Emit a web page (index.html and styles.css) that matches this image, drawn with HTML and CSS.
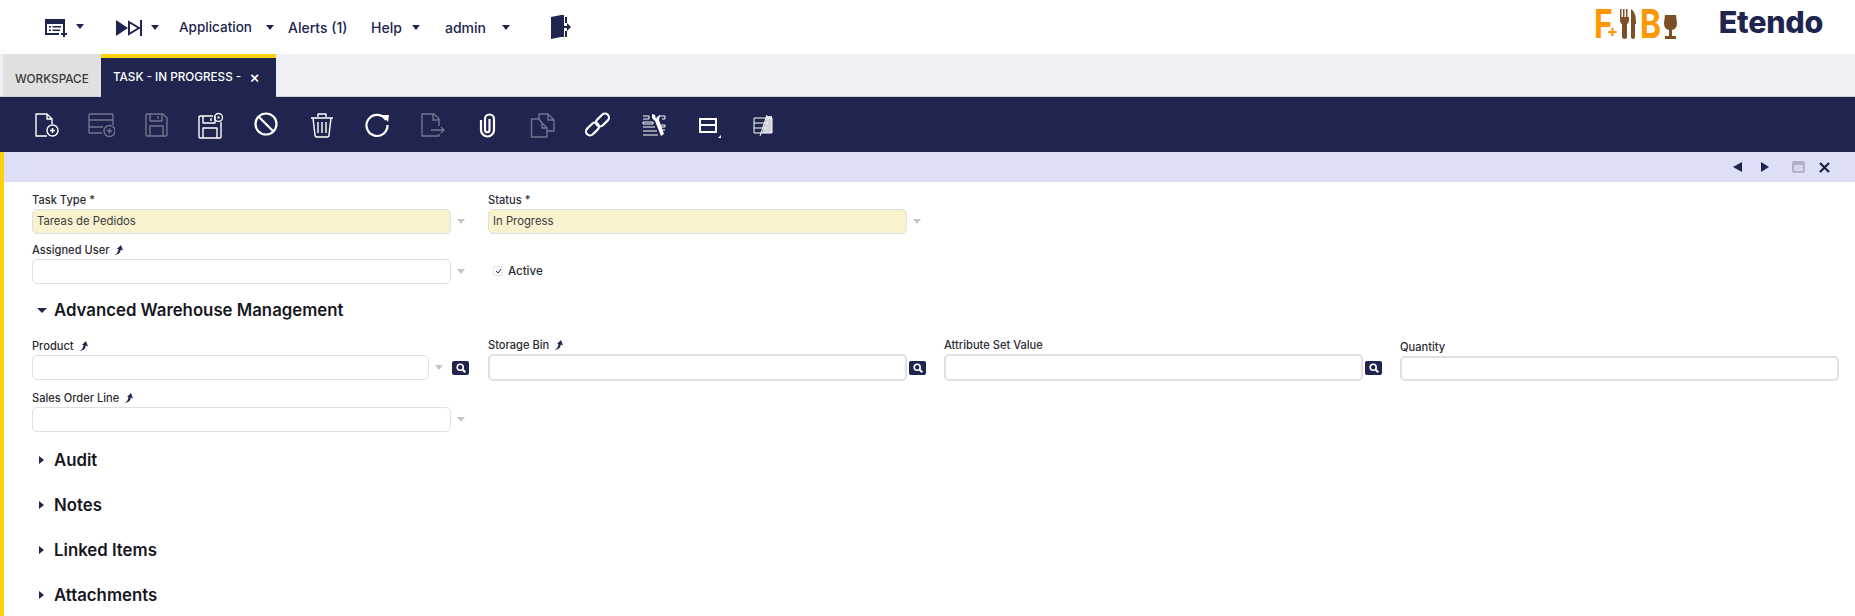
FILE: index.html
```html
<!DOCTYPE html>
<html lang="en">
<head>
<meta charset="utf-8">
<title>Task - In Progress</title>
<link rel="stylesheet" href="styles.css">
</head>
<body>
<header class="topbar">
  <svg class="ic-menu" width="22" height="18" viewBox="0 0 22 18"><path class="navy" fill-rule="evenodd" d="M0 0h20v12h-2V5H2v9h12v2H0zM4 7h2v1.500H4zM7.500 7H16v1.500H7.500zM4 10.500h2V12H4zM7.500 10.500H15V12H7.500z"/><path class="navy" d="M16 14h2v-2h2v2h2v2h-2v2h-2v-2h-2z"/></svg>
  <span class="caret caret-menu"></span>
  <svg class="ic-skip" width="26" height="16" viewBox="0 0 26 16"><path class="navy" d="M0 0l12 8-12 8z"/><path d="M13 2l10 6-10 6z" fill="none" stroke="#20254f" stroke-width="2"/><path class="navy" d="M24 0h2v16h-2z"/></svg>
  <span class="caret caret-skip"></span>
  <span class="nav nav-app">Application</span><span class="caret caret-app"></span>
  <span class="nav nav-alerts">Alerts (1)</span>
  <span class="nav nav-help">Help</span><span class="caret caret-help"></span>
  <span class="nav nav-admin">admin</span><span class="caret caret-admin"></span>
  <svg class="ic-exit" width="20" height="24" viewBox="0 0 20 24"><path class="navy" d="M0 2l10-2h3v11h-1v2h1v9h-3L0 24z"/><path class="navy" d="M14 2h2v6h-2zM14 16h2v6h-2zM11 11h5V8l4 4-4 4v-3h-5z"/></svg>
  <div class="logos">
    <div class="fnb">
      <span class="fnb-f">F</span><span class="fnb-plus">+</span>
      <svg class="fnb-cut" width="16" height="30" viewBox="0 0 16 30"><path class="brown" d="M0 0h1.500v8H3V0h1.500v8H6V0h1.500v8H9V11q0 3-2 4v13q0 2-2.500 2T2 28V15q-2-1-2-4zM11 0q5 3 5 13v2h-1v13q0 2-2 2t-2-2z"/></svg>
      <span class="fnb-b">B</span>
      <svg class="fnb-glass" width="13" height="24" viewBox="0 0 13 24"><path class="brown" d="M1 0h11l1 8q0 6-5 7v6h4v3H1v-3h4v-6Q0 14 0 8z"/></svg>
    </div>
    <span class="etendo">Etendo</span>
  </div>
</header>

<nav class="tabbar">
  <div class="tab tab-work">WORKSPACE</div>
  <div class="tab tab-active">TASK - IN PROGRESS -<span class="tab-x">×</span></div>
</nav>

<div class="toolbar">
  <span class="tool"><svg viewBox="0 0 28 28"><g class="st"><path d="M15 25H4V3h11l5 5v5M15 3v5h5"/><circle cx="20.500" cy="19.500" r="5.500"/><path d="M18 19.500h5M20.500 17v5" stroke-width="1.500"/></g></svg></span>
  <span class="tool off"><svg viewBox="0 0 28 28"><g class="st"><path d="M15 22H3a1 1 0 0 1-1-1V4a1 1 0 0 1 1-1h22a1 1 0 0 1 1 1v10M2 9h24M2 16h14"/><circle cx="22.500" cy="20" r="5.500"/><path d="M20 20h5M22.500 17.500v5" stroke-width="1.500"/></g></svg></span>
  <span class="tool off"><svg viewBox="0 0 28 28"><g class="st"><path d="M5 3h16l4 4v17a1 1 0 0 1-1 1H5a1 1 0 0 1-1-1V4a1 1 0 0 1 1-1zM8 3v7h12V3M8 25V15h13v10M16 5v3"/></g></svg></span>
  <span class="tool"><svg viewBox="0 0 28 28"><g class="st"><path d="M16 5H3a1 1 0 0 0-1 1v20a1 1 0 0 0 1 1h20a1 1 0 0 0 1-1V11M6 5v7h12V5M6 27V17h14v10M14 7v3"/><circle cx="21.500" cy="6.500" r="4"/><path d="M20.500 6.500h2" stroke-width="2"/></g></svg></span>
  <span class="tool"><svg viewBox="0 0 28 28"><g class="st thick"><circle cx="14" cy="13" r="10.500"/><path d="M7 6l14 14"/></g></svg></span>
  <span class="tool"><svg viewBox="0 0 28 28"><g class="st"><path d="M3 7h22M10 6V3h8v3M5 7l2 17q0 2 2 2h10q2 0 2-2l2-17M10 11v11M14 11v11M18 11v11"/></g></svg></span>
  <span class="tool"><svg viewBox="0 0 28 28"><g class="st thick"><path d="M23 9a10.500 10.500 0 1 0 1.500 5"/></g><path class="wh" d="M19 4l7 0-1 7z"/></svg></span>
  <span class="tool off"><svg viewBox="0 0 28 28"><g class="st"><path d="M21 15V8l-5-5H4v22h17v-2M15 3v6h6M13 19h13M23 16l3 3-3 3"/></g></svg></span>
  <span class="tool"><svg viewBox="0 0 28 28"><g class="st thick"><path d="M8 9v10a6.500 6.500 0 0 0 13 0V8a4.500 4.500 0 0 0-9 0v11a2 2 0 0 0 4.500 0V8"/></g></svg></span>
  <span class="tool off"><svg viewBox="0 0 28 28"><g class="st"><path d="M11 8H3.500v18H19v-9l-5-5v5h5M14 12l-3-4M11 8V3h9l6 6v11h-7M20 3v6h6"/></g></svg></span>
  <span class="tool"><svg viewBox="0 0 28 28"><g class="st thick"><rect x="12" y="5" width="15" height="8" rx="4" transform="rotate(-45 19.500 9)"/><rect x="2" y="14" width="15" height="8" rx="4" transform="rotate(-45 9.500 18)"/></g></svg></span>
  <span class="tool"><svg viewBox="0 0 28 28"><g class="st thin"><path d="M4 5h6v3H4M13 5h2M20 5h6v3h-3M4 11h10v2H4zM4 16h12M4 20h14M4 24h15M22 14h4v2h-4M22 19h4"/></g><path class="wh" d="M13 3l3 1 1 4 1-2 3-2-1 5 5 14-3 2-6-15-3-3z"/></svg></span>
  <span class="tool"><svg viewBox="0 0 28 28"><path class="wh" fill-rule="evenodd" d="M5 7h18v15H5zM7 9v4h14V9zM7 15v5h14v-5z"/><path class="wh" d="M27 24v3h-3z"/></svg></span>
  <span class="tool"><svg viewBox="0 0 28 28"><g class="st thin"><path d="M5 7h18v15H5zM5 12h14M5 17h12"/></g><path class="wh grad" d="M18 5l5 0v17H13z"/><path d="M18 4L11 25" stroke="#fff" stroke-width="1"/></svg></span>
</div>

<main class="view">
  <div class="band">
    <span class="tri-l"></span><span class="tri-r"></span>
    <span class="maxi"></span>
    <span class="close">
      <svg width="11" height="11" viewBox="0 0 11 11"><path d="M1 1l9 9M10 1l-9 9" stroke="#20254f" stroke-width="2.400" fill="none"/></svg>
    </span>
  </div>

  <form class="form">
    <div class="grid g1">
      <div class="field">
        <label>Task Type *</label>
        <div class="ctl"><div class="input req">Tareas de Pedidos</div><span class="drop"></span></div>
      </div>
      <div class="field">
        <label>Status *</label>
        <div class="ctl"><div class="input req">In Progress</div><span class="drop"></span></div>
      </div>
    </div>
    <div class="grid g2">
      <div class="field">
        <label>Assigned User <svg class="pin" viewBox="0 0 10 10"><path d="M0 10Q4 9 4.500 4H3L7 0l2 5.500L6.800 4.500Q6.500 9.500 0 10z"/></svg></label>
        <div class="ctl"><div class="input"></div><span class="drop"></span></div>
      </div>
      <div class="check"><span class="box"><svg width="7" height="6" viewBox="0 0 7 6"><path d="M1 3l2 2 3-4" stroke="#20254f" fill="none"/></svg></span>Active</div>
    </div>

    <h2 class="sec open"><span class="arrow-d"></span>Advanced Warehouse Management</h2>

    <div class="grid g3">
      <div class="field">
        <label>Product <svg class="pin" viewBox="0 0 10 10"><path d="M0 10Q4 9 4.500 4H3L7 0l2 5.500L6.800 4.500Q6.500 9.500 0 10z"/></svg></label>
        <div class="ctl"><div class="input short"></div><span class="drop"></span><span class="search"><svg width="10" height="10" viewBox="0 0 10 10"><circle cx="4.200" cy="4.200" r="3" fill="none" stroke="#fff" stroke-width="1.600"/><path d="M6.500 6.500L9.300 9.300" stroke="#fff" stroke-width="2"/></svg></span></div>
      </div>
      <div class="field up">
        <label>Storage Bin <svg class="pin" viewBox="0 0 10 10"><path d="M0 10Q4 9 4.500 4H3L7 0l2 5.500L6.800 4.500Q6.500 9.500 0 10z"/></svg></label>
        <div class="ctl"><div class="input tall"></div><span class="search near"><svg width="10" height="10" viewBox="0 0 10 10"><circle cx="4.200" cy="4.200" r="3" fill="none" stroke="#fff" stroke-width="1.600"/><path d="M6.500 6.500L9.300 9.300" stroke="#fff" stroke-width="2"/></svg></span></div>
      </div>
      <div class="field up">
        <label>Attribute Set Value</label>
        <div class="ctl"><div class="input tall"></div><span class="search near"><svg width="10" height="10" viewBox="0 0 10 10"><circle cx="4.200" cy="4.200" r="3" fill="none" stroke="#fff" stroke-width="1.600"/><path d="M6.500 6.500L9.300 9.300" stroke="#fff" stroke-width="2"/></svg></span></div>
      </div>
      <div class="field qty">
        <label>Quantity</label>
        <div class="ctl"><div class="input wide"></div></div>
      </div>
    </div>
    <div class="grid g4">
      <div class="field">
        <label>Sales Order Line <svg class="pin" viewBox="0 0 10 10"><path d="M0 10Q4 9 4.500 4H3L7 0l2 5.500L6.800 4.500Q6.500 9.500 0 10z"/></svg></label>
        <div class="ctl"><div class="input"></div><span class="drop"></span></div>
      </div>
    </div>

    <h2 class="sec first"><span class="arrow-r"></span>Audit</h2>
    <h2 class="sec"><span class="arrow-r"></span>Notes</h2>
    <h2 class="sec"><span class="arrow-r"></span>Linked Items</h2>
    <h2 class="sec"><span class="arrow-r"></span>Attachments</h2>
  </form>
</main>
</body>
</html>
```

FILE: styles.css
```css
* { box-sizing: border-box; }
html, body { margin: 0; height: 616px; overflow: hidden; background: #fff; }
body { font-family: Inter, "Noto Sans", "Liberation Sans", sans-serif; color: #20254f; }
.navy { fill: #20254f; }
.brown { fill: #7d4f26; }
.wh { fill: #fff; }
.grad { opacity: .8; }

/* top bar */
.topbar { display: flex; align-items: center; height: 54px; background: #fff; }
.ic-menu { margin: 2px 0 0 45px; flex: none; }
.ic-skip { margin: 1px 0 0 32px; flex: none; }
.ic-exit { margin-left: 41px; flex: none; }
.caret { flex: none; width: 0; height: 0; border-left: 4.500px solid transparent; border-right: 4.500px solid transparent; border-top: 5px solid #20254f; }
.caret-menu { margin: -2px 0 0 9px; }
.caret-skip { margin: 0 0 0 9px; }
.caret-app { margin: 0 0 0 8px; }
.caret-help { margin: 0 0 0 8px; }
.caret-admin { margin: 0 0 0 11px; }
.nav { font-size: 14px; font-weight: 500; white-space: nowrap; color: #20254f; }
.nav-app { margin-left: 20px; width: 79px; font-size: 13.500px; }
.nav-alerts { margin-left: 14px; width: 65px; }
.nav-help { margin-left: 18px; width: 33px; }
.nav-admin { margin-left: 25px; width: 46px; }
.logos { margin-left: auto; display: flex; align-items: center; padding-right: 32px; }
.fnb { display: flex; align-items: center; position: relative; height: 30px; margin-top: -7px; color: #ff9800; }
.fnb-f, .fnb-b { display: block; font-size: 40px; font-weight: 700; line-height: 30px; color: #ff9800; transform: scaleX(.8); transform-origin: left center; }
.fnb-f { width: 26px; }
.fnb-b { width: 24px; margin-left: 4px; }
.fnb-cut { flex: none; }
.fnb-glass { flex: none; margin-top: 6px; }
.fnb-plus { position: absolute; left: 13px; top: 15px; font-size: 17px; font-weight: 700; line-height: 15px; color: #ff9800; }
.etendo { margin-left: 42px; font-size: 30.500px; font-weight: 800; letter-spacing: -.3px; color: #20254f; line-height: 34px; margin-top: -10px; }

/* tabs */
.tabbar { display: flex; height: 43px; padding-left: 3px; background: #eff0f5; box-shadow: inset 0 -1px 0 #cfd0d4; }
.tab { white-space: nowrap; font-weight: 500; font-size: 11.700px; }
.tab-work { width: 98px; padding: 18px 0 0 12px; background: #e0e0e0; box-shadow: inset 0 -1px 0 #cfd0d4; color: #3a3a3a; line-height: 14px; }
.tab-active { display: flex; width: 175px; padding: 12px 0 0 12px; background: #20254f; border-top: 4px solid #fbd20c; color: #fff; line-height: 14px; }
.tab-x { margin-left: 8px; font-size: 16px; line-height: 14px; font-weight: 500; }

/* toolbar */
.toolbar { display: flex; align-items: center; height: 55px; padding-left: 18px; background: #20254f; }
.tool { display: flex; width: 55.200px; justify-content: center; flex: none; }
.tool svg { width: 28px; height: 28px; display: block; }
.tool.off { opacity: .36; }
.st { fill: none; stroke: #fff; stroke-width: 1.400; stroke-linejoin: round; }
.st.thick { stroke-width: 2.200; }
.st.thin { stroke-width: 1; }

/* view */
.view { height: 464px; border-left: 4px solid #fbd20c; }
.band { display: flex; align-items: center; height: 30px; background: #dddff6; padding-left: 1729px; }
.tri-l, .tri-r { width: 0; height: 0; border-top: 5px solid transparent; border-bottom: 5px solid transparent; }
.tri-l { border-right: 9px solid #20254f; }
.tri-r { margin-left: 19px; border-left: 8px solid #20254f; }
.maxi { width: 13px; height: 12px; margin-left: 23px; border: 2px solid #afb1cf; border-top-width: 4px; border-radius: 2px; background: #d5d7ef; }
.close { display: flex; margin-left: 14px; }

/* form */
.form { padding-left: 28px; }
.grid { display: grid; grid-template-columns: repeat(4, 456px); }
.g1 { padding-top: 11px; }
.g2 { padding-top: 9px; }
.g3 { padding-top: 17px; height: 69px; }
.field label { display: block; height: 16px; font-size: 11.100px; font-weight: 500; line-height: 14px; color: #2b2b33; white-space: nowrap; }
.field.up { margin-top: -1px; }
.field.qty { margin-top: 1px; }
.pin { width: 10px; height: 10px; margin-left: 2px; vertical-align: -1px; fill: #20254f; }
.ctl { display: flex; align-items: center; }
.input { width: 419px; height: 25px; flex: none; padding: 0 4px; font-size: 11.300px; line-height: 23px; color: #3c3c3c; background: #fff; border: 1px solid #e0e0e0; border-radius: 5px; }
.input.req { background: #f9f2cf; }
.input.short { width: 397px; }
.input.tall { width: 419px; height: 27px; border-width: 2px; }
.input.wide { width: 439px; border-width: 2px; }
.drop { flex: none; width: 0; height: 0; margin-left: 6px; border-left: 4px solid transparent; border-right: 4px solid transparent; border-top: 5px solid #c4c4c4; }
.search { display: flex; align-items: center; justify-content: center; flex: none; width: 17px; height: 14px; margin-left: 9px; background: #20254f; border-radius: 2px; }
.search.near { margin-left: 2px; }
.check { display: flex; align-items: center; height: 41px; padding: 15px 0 0 5px; font-size: 11.500px; font-weight: 500; color: #2b2b33; }
.box { display: flex; align-items: center; justify-content: center; width: 10px; height: 10px; margin-right: 5px; border: 1px solid #e4e4e4; border-radius: 2px; }
.sec { display: flex; align-items: center; height: 24px; margin: 21px 0 0 0; padding-left: 22px; position: relative; font-size: 16.800px; font-weight: 600; color: #17171f; }
.sec.open { margin-top: 14px; }
.sec.first { margin-top: 16px; }
.arrow-d { position: absolute; left: 5px; top: 10px; width: 0; height: 0; border-left: 5px solid transparent; border-right: 5px solid transparent; border-top: 5px solid #20254f; }
.arrow-r { position: absolute; left: 7px; top: 8px; width: 0; height: 0; border-top: 4.500px solid transparent; border-bottom: 4.500px solid transparent; border-left: 5px solid #20254f; }
```
